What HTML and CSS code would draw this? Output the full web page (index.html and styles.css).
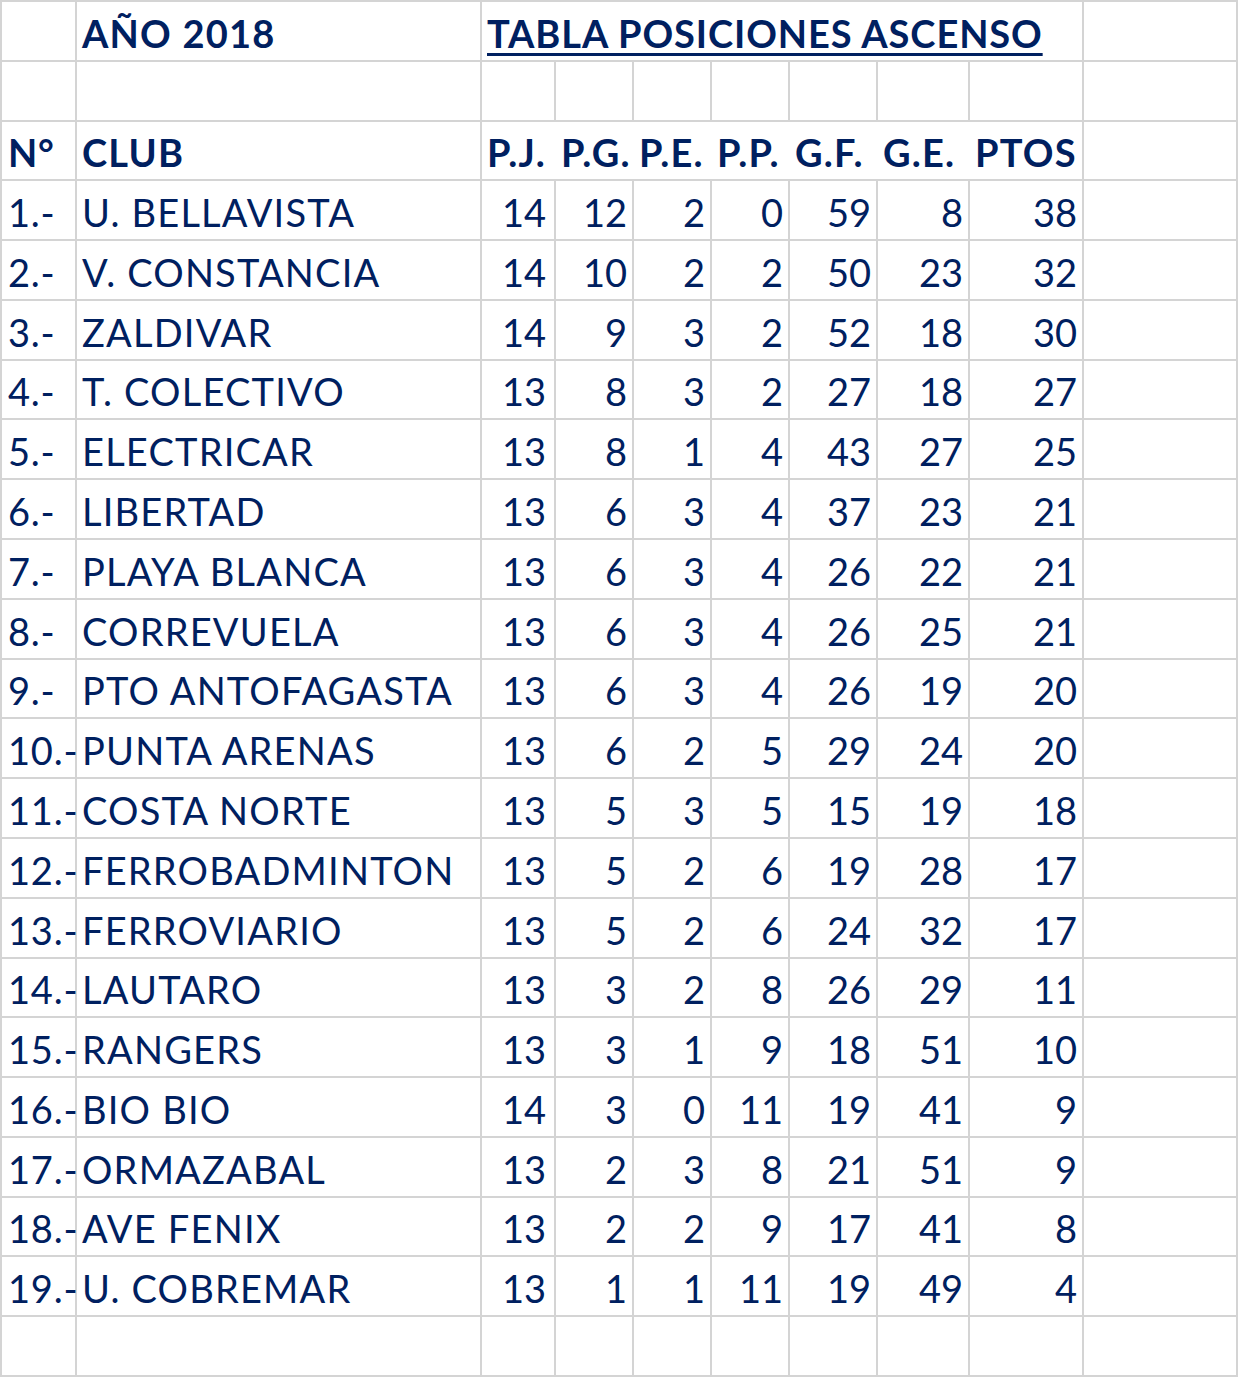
FILE: index.html
```html
<!DOCTYPE html>
<html lang="es">
<head>
<meta charset="utf-8">
<title>Tabla Posiciones Ascenso 2018</title>
<link rel="stylesheet" href="styles.css">
</head>
<body>
<div class="sheet">
  <div class="c"></div><div class="c b">AÑO 2018</div><div class="c b title"><span class="u">TABLA POSICIONES ASCENSO</span></div><div class="c"></div>
  <div class="c"></div><div class="c"></div><div class="c"></div><div class="c"></div><div class="c"></div><div class="c"></div><div class="c"></div><div class="c"></div><div class="c"></div><div class="c"></div>
  <div class="c b">N°</div><div class="c b">CLUB</div><div class="c b nr">P.J.</div><div class="c b nr">P.G.</div><div class="c b nr">P.E.</div><div class="c b nr">P.P.</div><div class="c b nr">G.F.</div><div class="c b nr">G.E.</div><div class="c b">PTOS</div><div class="c"></div>

  <div class="c">1.-</div><div class="c">U. BELLAVISTA</div><div class="c n">14</div><div class="c n">12</div><div class="c n">2</div><div class="c n">0</div><div class="c n">59</div><div class="c n">8</div><div class="c n">38</div><div class="c"></div>
  <div class="c">2.-</div><div class="c">V. CONSTANCIA</div><div class="c n">14</div><div class="c n">10</div><div class="c n">2</div><div class="c n">2</div><div class="c n">50</div><div class="c n">23</div><div class="c n">32</div><div class="c"></div>
  <div class="c">3.-</div><div class="c">ZALDIVAR</div><div class="c n">14</div><div class="c n">9</div><div class="c n">3</div><div class="c n">2</div><div class="c n">52</div><div class="c n">18</div><div class="c n">30</div><div class="c"></div>
  <div class="c">4.-</div><div class="c">T. COLECTIVO</div><div class="c n">13</div><div class="c n">8</div><div class="c n">3</div><div class="c n">2</div><div class="c n">27</div><div class="c n">18</div><div class="c n">27</div><div class="c"></div>
  <div class="c">5.-</div><div class="c">ELECTRICAR</div><div class="c n">13</div><div class="c n">8</div><div class="c n">1</div><div class="c n">4</div><div class="c n">43</div><div class="c n">27</div><div class="c n">25</div><div class="c"></div>
  <div class="c">6.-</div><div class="c">LIBERTAD</div><div class="c n">13</div><div class="c n">6</div><div class="c n">3</div><div class="c n">4</div><div class="c n">37</div><div class="c n">23</div><div class="c n">21</div><div class="c"></div>
  <div class="c">7.-</div><div class="c">PLAYA BLANCA</div><div class="c n">13</div><div class="c n">6</div><div class="c n">3</div><div class="c n">4</div><div class="c n">26</div><div class="c n">22</div><div class="c n">21</div><div class="c"></div>
  <div class="c">8.-</div><div class="c">CORREVUELA</div><div class="c n">13</div><div class="c n">6</div><div class="c n">3</div><div class="c n">4</div><div class="c n">26</div><div class="c n">25</div><div class="c n">21</div><div class="c"></div>
  <div class="c">9.-</div><div class="c">PTO ANTOFAGASTA</div><div class="c n">13</div><div class="c n">6</div><div class="c n">3</div><div class="c n">4</div><div class="c n">26</div><div class="c n">19</div><div class="c n">20</div><div class="c"></div>
  <div class="c">10.-</div><div class="c">PUNTA ARENAS</div><div class="c n">13</div><div class="c n">6</div><div class="c n">2</div><div class="c n">5</div><div class="c n">29</div><div class="c n">24</div><div class="c n">20</div><div class="c"></div>
  <div class="c">11.-</div><div class="c">COSTA NORTE</div><div class="c n">13</div><div class="c n">5</div><div class="c n">3</div><div class="c n">5</div><div class="c n">15</div><div class="c n">19</div><div class="c n">18</div><div class="c"></div>
  <div class="c">12.-</div><div class="c">FERROBADMINTON</div><div class="c n">13</div><div class="c n">5</div><div class="c n">2</div><div class="c n">6</div><div class="c n">19</div><div class="c n">28</div><div class="c n">17</div><div class="c"></div>
  <div class="c">13.-</div><div class="c">FERROVIARIO</div><div class="c n">13</div><div class="c n">5</div><div class="c n">2</div><div class="c n">6</div><div class="c n">24</div><div class="c n">32</div><div class="c n">17</div><div class="c"></div>
  <div class="c">14.-</div><div class="c">LAUTARO</div><div class="c n">13</div><div class="c n">3</div><div class="c n">2</div><div class="c n">8</div><div class="c n">26</div><div class="c n">29</div><div class="c n">11</div><div class="c"></div>
  <div class="c">15.-</div><div class="c">RANGERS</div><div class="c n">13</div><div class="c n">3</div><div class="c n">1</div><div class="c n">9</div><div class="c n">18</div><div class="c n">51</div><div class="c n">10</div><div class="c"></div>
  <div class="c">16.-</div><div class="c">BIO BIO</div><div class="c n">14</div><div class="c n">3</div><div class="c n">0</div><div class="c n">11</div><div class="c n">19</div><div class="c n">41</div><div class="c n">9</div><div class="c"></div>
  <div class="c">17.-</div><div class="c">ORMAZABAL</div><div class="c n">13</div><div class="c n">2</div><div class="c n">3</div><div class="c n">8</div><div class="c n">21</div><div class="c n">51</div><div class="c n">9</div><div class="c"></div>
  <div class="c">18.-</div><div class="c">AVE FENIX</div><div class="c n">13</div><div class="c n">2</div><div class="c n">2</div><div class="c n">9</div><div class="c n">17</div><div class="c n">41</div><div class="c n">8</div><div class="c"></div>
  <div class="c">19.-</div><div class="c">U. COBREMAR</div><div class="c n">13</div><div class="c n">1</div><div class="c n">1</div><div class="c n">11</div><div class="c n">19</div><div class="c n">49</div><div class="c n">4</div><div class="c"></div>

  <div class="c"></div><div class="c"></div><div class="c"></div><div class="c"></div><div class="c"></div><div class="c"></div><div class="c"></div><div class="c"></div><div class="c"></div><div class="c"></div>
</div>
</body>
</html>
```

FILE: styles.css
```css
* {
  box-sizing: border-box;
}

html, body {
  margin: 0;
  padding: 0;
  background: #ffffff;
}

.sheet {
  display: grid;
  grid-template-columns: 75px 405px 74px 78px 78px 78px 88px 92px 114px 154px;
  grid-template-rows: repeat(23, 1fr);
  width: 1238px;
  height: 1377px;
  border-top: 2px solid #d4d4d4;
  border-left: 2px solid #d4d4d4;
  font-family: Lato, "Open Sans", sans-serif;
  font-size: 38px;
  color: #002060;
}

.c {
  display: flex;
  align-items: flex-end;
  border-right: 2px solid #d4d4d4;
  border-bottom: 2px solid #d4d4d4;
  padding: 0 5px 8px 5px;
  line-height: 38px;
  letter-spacing: 1.2px;
  white-space: nowrap;
  min-width: 0;
}

/* first column (N°) */
.c:nth-child(10n+5) {
  padding-left: 6px;
  padding-right: 0;
  letter-spacing: 0.8px;
}

.n {
  justify-content: flex-end;
  letter-spacing: 0;
}

/* P.J. column */
.n:nth-child(10n+7) {
  padding-right: 8px;
}

.b {
  font-weight: 700;
}

.nr {
  border-right: none;
  padding-right: 2px;
}

.title {
  grid-column: 3 / 10;
  letter-spacing: 0.9px;
}

.u {
  text-decoration: underline;
  text-decoration-thickness: 3px;
  text-underline-offset: 5px;
}
```
